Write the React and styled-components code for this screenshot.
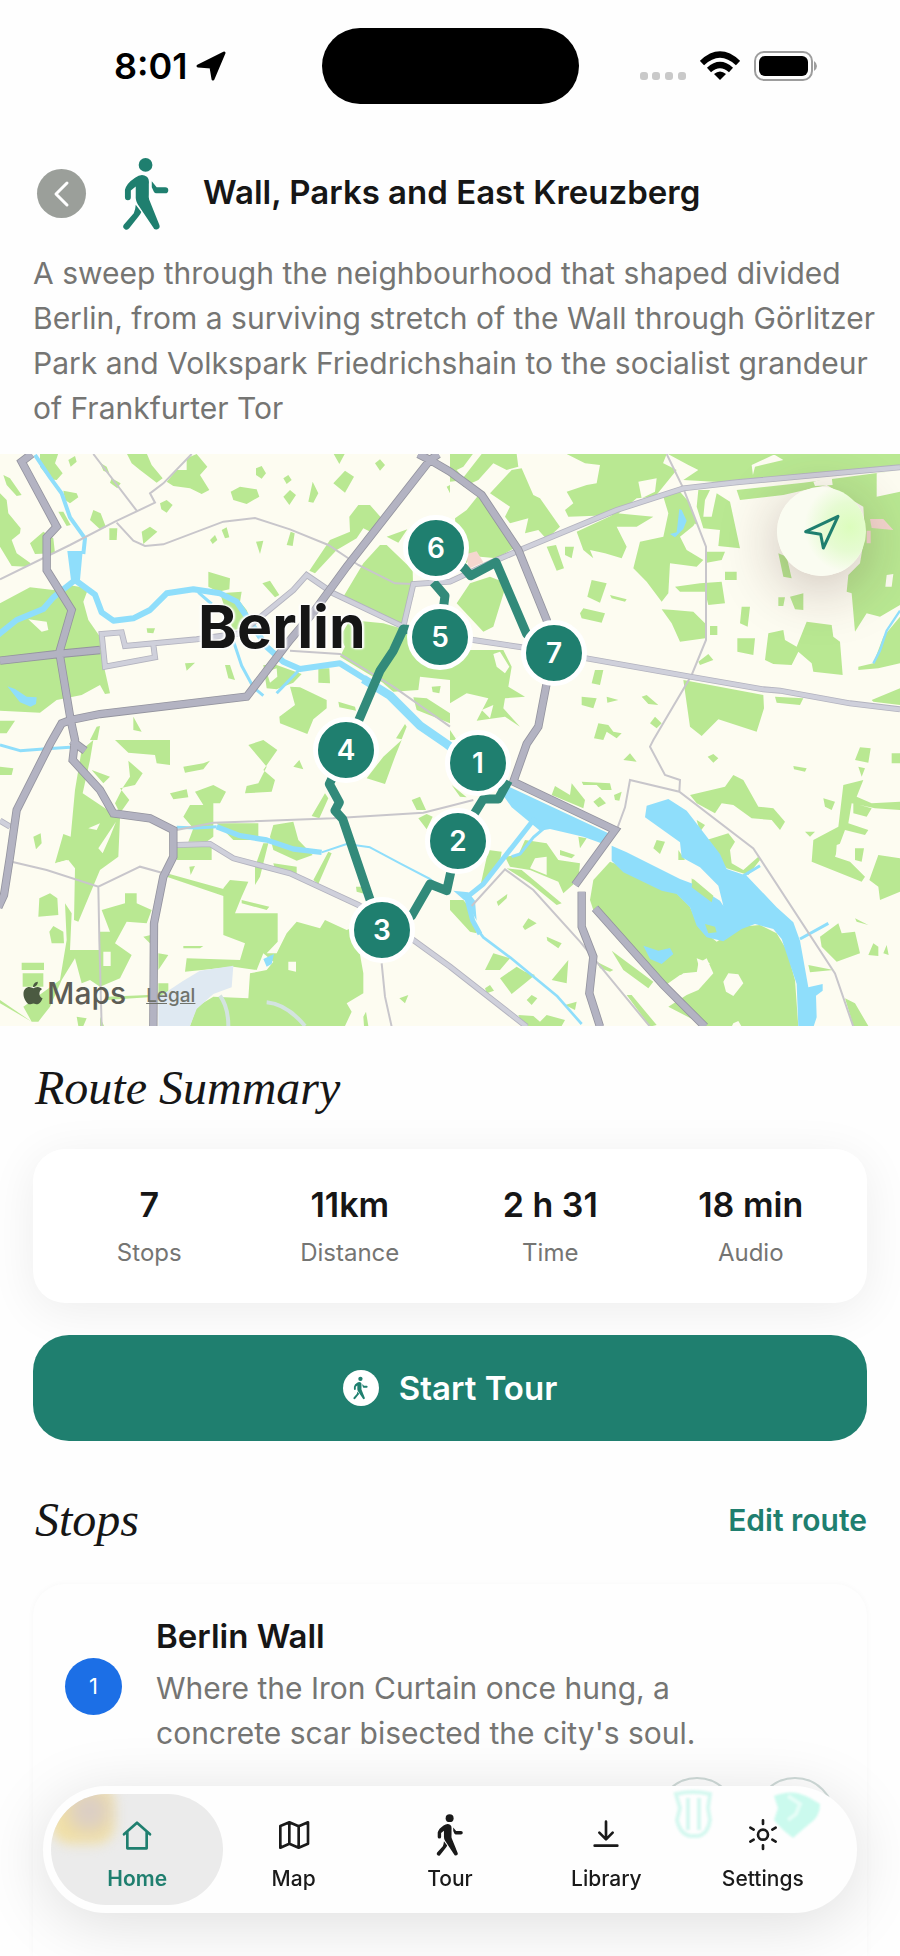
import styled, { createGlobalStyle } from "styled-components"
import { FaApple } from "react-icons/fa"

const GlobalStyle = createGlobalStyle`
  * {
    box-sizing: border-box;
  }
  body {
    margin: 0;
    background: #fefefe;
    color: #161616;
    font-family: Inter, "Liberation Sans", sans-serif;
  }
  button {
    font-family: inherit;
    border: none;
    padding: 0;
    cursor: pointer;
  }
`

const green = "#1f7f6f"
const grey = "#757573"

const Page = styled.div`
  min-height: 100vh;
  display: flex;
  flex-direction: column;
  overflow: hidden;
`

const StatusBar = styled.div`
  height: 136px;
  padding: 28px 82px 0;
  display: grid;
  grid-template-columns: 1fr 257px 1fr;
  align-items: start;
`
const StatusGroup = styled.div`
  height: 76px;
  padding-left: 32px;
  display: flex;
  align-items: center;
  justify-content: ${(props) => props.$end ? "flex-end" : "flex-start"};
  gap: ${(props) => props.$end ? "14px" : "8px"};
`
const Clock = styled.span`
  font-size: 36px;
  font-weight: 600;
  color: #000;
`
const Island = styled.div`
  height: 76px;
  border-radius: 38px;
  background: #000;
`

const Header = styled.header`
  height: 115px;
  padding: 0 37px;
  display: flex;
  align-items: center;
`
const BackButton = styled.button`
  width: 49px;
  height: 49px;
  border-radius: 50%;
  background: #9b9f9a;
  display: flex;
  align-items: center;
  justify-content: center;
`
const HeaderIcon = styled.div`
  display: flex;
  margin: 0 34px 0 36px;
`
const Title = styled.h1`
  margin: 0;
  padding-bottom: 3px;
  font-size: 33px;
  font-weight: 600;
`
const Description = styled.p`
  margin: 0;
  padding: 0 20px 23px 33px;
  font-size: 30px;
  line-height: 45px;
  color: ${grey};
`

const MapArea = styled.section`
  position: relative;
  aspect-ratio: 900 / 572;
  overflow: hidden;
`
const MapDrawing = styled.svg`
  display: block;
  width: 100%;
  height: 100%;
`
const CityName = styled.div`
  position: absolute;
  left: 22%;
  top: 25%;
  font-size: 59px;
  line-height: 60px;
  font-weight: 700;
  text-shadow: 0 0 3px #fff, 1px 1px 2px #fff, -1px -1px 2px #fff, 2px 0 2px #fff, -2px 0 2px #fff;
`
const Pin = styled.button`
  position: absolute;
  left: ${(props) => props.$x / 9}%;
  top: ${(props) => props.$y / 5.72}%;
  width: 66px;
  height: 66px;
  margin: -33px 0 0 -33px;
  border: 5px solid #fff;
  border-radius: 50%;
  background: ${green};
  color: #fff;
  font-size: 28px;
  font-weight: 600;
`
const LocateButton = styled.button`
  position: absolute;
  right: 34px;
  top: 33px;
  width: 89px;
  height: 89px;
  border-radius: 50%;
  background: radial-gradient(circle at 82% 45%, #dcfdbd 0%, #e6fbd2 28%, #fafcf1 52%);
  box-shadow: 0 12px 60px rgba(60, 20, 20, 0.28);
  display: flex;
  align-items: center;
  justify-content: center;
`
const MapCredit = styled.div`
  position: absolute;
  left: 20px;
  bottom: 16px;
  display: flex;
  align-items: center;
  color: #4b5a41;
`
const MapBrand = styled.span`
  margin-left: 1px;
  font-size: 30px;
  line-height: 34px;
  font-weight: 500;
  color: #5c5c55;
`
const Legal = styled.a`
  margin-left: 20px;
  padding-top: 4px;
  font-size: 19px;
  font-weight: 500;
  color: #70736b;
`

const Content = styled.main`
  flex: 1;
  display: flex;
  flex-direction: column;
  padding: 32px 33px 0;
`
const SectionTitle = styled.h2`
  margin: 0;
  padding-left: 2px;
  font-family: "Liberation Serif", serif;
  font-style: italic;
  font-weight: 400;
  font-size: 48px;
  line-height: 60px;
`
const Summary = styled.dl`
  margin: 31px 0 32px;
  height: 154px;
  padding: 4px 16px 0;
  border-radius: 32px;
  background: #fff;
  box-shadow: 0 8px 48px rgba(0, 0, 0, 0.07);
  display: grid;
  grid-template-columns: repeat(4, 1fr);
  align-items: center;
`
const Stat = styled.div`
  display: flex;
  flex-direction: column-reverse;
  align-items: center;
  gap: 14px;
`
const StatLabel = styled.dt`
  font-size: 24px;
  line-height: 32px;
  color: ${grey};
`
const StatValue = styled.dd`
  margin: 0;
  font-size: 34px;
  line-height: 36px;
  font-weight: 600;
`
const StartButton = styled.button`
  height: 106px;
  border-radius: 36px;
  background: ${green};
  color: #fff;
  font-size: 33px;
  font-weight: 600;
  display: flex;
  align-items: center;
  justify-content: center;
  gap: 20px;
`
const RoundIcon = styled.span`
  width: 36px;
  height: 36px;
  border-radius: 50%;
  background: #fff;
  display: flex;
  align-items: center;
  justify-content: center;
`
const StopsHeader = styled.div`
  margin-top: 49px;
  display: flex;
  align-items: center;
  justify-content: space-between;
`
const EditLink = styled.a`
  color: ${green};
  font-size: 30px;
  font-weight: 600;
  text-decoration: none;
`
const StopCard = styled.article`
  flex: 1;
  margin-top: 34px;
  padding: 32px;
  border-radius: 32px 32px 0 0;
  background: #fefefe;
  box-shadow: 0 0 6px rgba(0, 0, 0, 0.03);
`
const StopRow = styled.div`
  display: flex;
  align-items: center;
  gap: 34px;
`
const StopNumber = styled.span`
  flex: none;
  width: 57px;
  height: 57px;
  border-radius: 50%;
  background: #1c6fe6;
  color: #fff;
  font-size: 22px;
  display: flex;
  align-items: center;
  justify-content: center;
`
const StopTitle = styled.h3`
  margin: 0;
  font-size: 33px;
  line-height: 40px;
  font-weight: 600;
`
const StopText = styled.p`
  margin: 10px 0 0;
  max-width: 560px;
  font-size: 30px;
  line-height: 45px;
  color: ${grey};
`
const StopActions = styled.div`
  margin-top: 21px;
  display: flex;
  justify-content: flex-end;
  gap: 18px;
`
const ActionButton = styled.button`
  width: 80px;
  height: 80px;
  border-radius: 50%;
  border: 2px solid #cfdad8;
  background: transparent;
`

const TabBar = styled.nav`
  position: fixed;
  left: 43px;
  right: 43px;
  bottom: 43px;
  height: 127px;
  padding: 0 16px;
  border-radius: 64px;
  background: #fefefe;
  box-shadow: 0 10px 64px rgba(0, 0, 0, 0.13);
  display: grid;
  grid-template-columns: repeat(5, 1fr);
`
const Tab = styled.a`
  position: relative;
  margin: 8px ${(props) => props.$active ? "-8px" : "0"};
  padding-top: 19px;
  border-radius: 56px;
  background: ${(props) => props.$active ? "#ebebeb" : "transparent"};
  color: ${(props) => props.$active ? green : "#1a1a1a"};
  display: flex;
  flex-direction: column;
  align-items: center;
  gap: 10px;
  text-decoration: none;
  font-size: 21px;
  line-height: 24px;
  font-weight: ${(props) => props.$active ? 600 : 500};
  overflow: hidden;
`
const TabIcon = styled.span`
  position: relative;
  height: 44px;
  display: flex;
  align-items: center;
`
const TabLabel = styled.span`
  position: relative;
`
const WarmGlow = styled.span`
  position: absolute;
  left: 0;
  top: -10px;
  width: 64px;
  height: 60px;
  border-radius: 20px;
  background: radial-gradient(circle at 60% 45%, #dccfc4 0 20%, #f0dfa6 58%);
  filter: blur(6px);
`
const GlassTint = styled.svg`
  position: absolute;
  right: 29px;
  top: 0;
  width: 160px;
  height: 60px;
`
const TintShape = styled.g`
  filter: blur(1px);
`

const Walker = ({ height, color }) => (
  <svg height={height} width={height * 0.62} viewBox="304 76 144 230" fill={color}>
    <circle cx="376" cy="102" r="21" />
    <path d="M344 141Q364 126 380 138Q388 145 386 162V190Q385 202 387 208L418 285A10 10 0 0 1 399 293L352 222Q345 212 346 195V168L331 180V201A8 8 0 0 1 313 201V178Q318 158 344 141Z" />
    <path d="M395 152L410 170H436A9 9 0 0 1 436 189H409Q404 189 401 183L395 170Z" />
    <path d="M346 224L363 246Q361 252 355 259L326 296A10 10 0 0 1 310 284L340 250Q345 240 346 224Z" />
  </svg>
)

const LineIcon = ({ d, children }) => (
  <svg width="32" height="32" viewBox="0 0 96 96" fill="none" stroke="currentColor" strokeWidth="8" strokeLinecap="round" strokeLinejoin="round">
    <path d={d} />
    {children}
  </svg>
)

// the map is drawn at three units to the pixel, in four sheets
const sheets = {
  nw: "translate(0 -12)",
  ne: "translate(1350 -12)",
  sw: "translate(0 858)",
  se: "translate(1350 858)",
}

const parks = {
  nw: `M120 10H175L165 40L188 70L170 90L150 88L120 50ZM380 10H440L455 45L488 85L470 98L420 60L395 40ZM560 25L590 12L622 50L600 75L628 120L605 132L570 115L520 108L500 95L530 60L560 60Z
    M10 75L30 85L65 135L50 138L20 105ZM0 130L20 150L25 190L62 235L60 250L35 270L50 310L92 340L80 350L35 348L0 290Z
    M190 122L230 130L235 142L210 160L195 150ZM90 280L130 245L160 265L165 310L105 312ZM270 210L280 180L302 190L318 232L300 238ZM175 185L190 185L212 225L200 228ZM205 30L225 18L230 35L212 50ZM300 38L320 50L328 70L310 62ZM335 85L362 100L352 115L330 98Z
    M328 235L352 235L350 270L328 270ZM425 245L450 230L472 245L430 282ZM480 160L500 150L518 165L500 188L484 178ZM692 125L720 110L770 118L778 140L740 162L700 150ZM850 140L870 120L888 135L868 165ZM925 155L938 95L955 130L940 158ZM1000 100L1035 62L1062 80L1035 128ZM768 55L785 48L798 70L785 86L768 75ZM1125 40L1140 28L1155 45L1140 62ZM850 85L865 75L875 90L860 102ZM1000 10H1035L1018 42Z
    M630 270L645 255L652 270L638 282ZM665 240L680 232L688 262L675 265ZM768 275L790 272L780 312ZM860 285L872 245L884 250L878 288ZM1048 200L1075 165L1110 165L1145 205L1120 250L1090 235L1070 265L1010 300L945 370L928 362L990 270L1050 245ZM1160 260L1222 238L1195 278ZM1140 285L1160 285L1238 360L1240 440L1205 520L1030 440L1090 340Z
    M0 460L90 412L160 420L205 405L265 415L250 455L265 510L300 560L312 650L330 730L315 732L300 705L245 735L170 750L120 788L0 782ZM625 365L690 385L688 418L655 425L625 410ZM787 400L810 392L838 435L825 442ZM660 430L725 425L720 455L740 480L760 530L700 540L680 490ZM440 535L465 535L460 550L442 548ZM555 640L585 638L560 662ZM675 645L690 645L705 690L685 685ZM1050 510L1150 520L1220 540L1350 590V690L1260 680L1200 705L1160 705L1020 620L1035 590L1020 560Z
    M790 645L830 645L905 672L880 698L830 718L800 715ZM955 655L988 655L990 700L955 698ZM1180 640L1350 640V690L1260 680L1255 720L1180 725L1150 700ZM870 710L900 712L980 750L980 775L940 808L922 852L840 820L838 800L885 765ZM400 800L425 845L400 840ZM270 870L290 830L300 828L292 870ZM0 812L45 812L20 850H0ZM1240 742L1280 745L1350 790V820L1250 780ZM1188 865L1215 822L1220 830L1205 868ZM1015 755L1065 770L1068 782L1018 772ZM1295 710L1322 708L1318 730L1298 726ZM1340 110L1350 105V130Z`,
  ne: `M0 10H70L40 50L20 60L45 90L0 95ZM95 12H200L205 50L170 60L130 40L85 90L40 110L30 95ZM185 60L215 55L250 135L270 145L330 230L290 268L265 240L225 250L235 205L180 220L165 200L180 170L120 130ZM15 205L50 180L90 130L130 190L180 240L200 290L140 325L90 320L65 310L50 340L20 300Z
    M350 12H565L580 65L640 40L680 60L615 140L560 145L500 195L355 200L345 180L370 160L350 125L410 105L440 100L450 45L405 40ZM560 12H650L635 50L580 65ZM650 10H980L905 45L910 85L870 100L700 90L745 60L715 45ZM970 12H1350V50L1290 60L905 90L915 50L1000 30ZM860 120L1060 98L1350 60L1280 70V140L1350 125V465L1290 500L1250 490L1215 545L1205 430L1190 425L1195 375L1230 340L1245 250L1240 170L1130 105L1000 135L870 150Z
    M745 120L780 120L765 150L760 200H785L800 130L840 155L870 295L805 288L810 240L760 235L740 170ZM380 245L500 190L610 200L560 230H500L530 290L515 325L465 310L420 300L430 325L400 300ZM640 140L690 125L720 160L740 220L690 260L710 300L760 330L740 350L660 340L655 430L635 455L590 395L550 355L570 275L640 260L655 190ZM770 305L825 305L815 330L770 338ZM825 365H860V390H825ZM675 410L750 400L815 395L825 460L775 465L765 425L690 425ZM635 478L670 480L730 485L765 520V565L690 575L665 520Z
    M290 290L318 285L342 355L320 362ZM345 290L372 290L365 325L345 315ZM412 440L425 390L470 400L450 458ZM390 490L400 475L465 490L455 518L395 505ZM480 435L530 448L525 455L485 445ZM985 310L1010 320L1025 385L1000 380ZM985 442H1005L1000 468H985ZM1020 440L1060 430V480L1035 478ZM875 470L900 470L893 530L870 520ZM862 565L915 565L910 615L862 605ZM780 528H802V555H780ZM945 630L955 550L1000 540L1005 570L1040 590L1070 515L1145 525L1150 560L1170 575L1178 675L1090 665L1085 640L1045 605L1025 645L970 642ZM745 635L775 612L790 630L750 645ZM1225 650L1270 640L1300 560L1350 500V640L1285 655L1225 660ZM1265 750L1350 715V765L1270 755ZM975 740L1060 745L1050 765L980 758Z
    M60 400L120 380L170 400L130 530L100 545L20 460ZM0 610L40 600L160 600L185 650L175 710L225 740L165 745L160 775L210 830L165 800L80 812L115 745L50 730L0 760ZM0 840L20 870H0ZM435 660H460L450 705L425 700ZM395 740L440 745L430 775L395 765ZM470 740L505 750L472 758ZM575 740L590 735L625 765L595 762ZM600 820L615 800L635 820L620 835ZM432 865L445 820L475 825L490 845L515 850L500 865L470 845L460 870ZM700 690L940 735L942 775L920 845L805 808L755 858L720 830Z`,
  sw: `M245 30L280 0L270 60L248 160L360 235L355 350L300 390L235 545L222 540L225 385L205 360L165 370L190 282L212 290L225 150ZM345 0H510V75L470 70L465 45L385 38ZM385 62L428 100L405 135L360 145L388 180L360 220L345 190L370 140L390 110ZM275 90L330 110L310 130ZM550 80L610 70L630 62L610 88L555 98ZM745 15L790 0L832 30L790 90L825 120L815 155L735 160L740 138L775 130L800 80ZM510 160L560 148L565 172L520 178ZM585 155L640 135L678 155L660 190L640 190V290L620 305L565 305L580 265L550 230L570 195H610ZM880 80L898 60L910 88ZM1100 115L1150 50L1205 0L1185 50L1155 132ZM1235 180L1260 170L1278 210H1250ZM1255 235L1280 222L1298 230L1280 268ZM935 228L975 160L985 175L958 235ZM530 318H635V360H530ZM650 250L775 250V300L700 300ZM820 255L880 245L895 300L938 345L890 362L820 330L810 290ZM790 310L805 310L780 410L765 435V380ZM820 370L890 380V400L825 390ZM940 420L985 335L995 340L955 432ZM0 80L40 85L35 105L0 105ZM100 290L122 280L125 310L108 328ZM568 380L585 378L572 405ZM500 400L700 455L690 475L500 410ZM1068 440L1100 440L1095 462L1070 455Z
    M670 445L690 420L745 425L725 470L705 520H833V605L800 640L830 640L860 580L890 545L960 565L975 540L1040 570L1065 560L1090 700V760L1040 790L1055 815L1035 858H570L590 800L640 770L745 775L750 700L800 690L820 665L790 640L770 690L700 680L555 695L560 655L720 660L735 610L670 585ZM725 480L808 500L800 510L725 490ZM115 530L118 475L150 460L172 475L175 525ZM148 575L160 558L190 575L192 610L155 610ZM305 510L375 490V460H410V490L455 510L440 550L380 545L345 610L395 645L360 715L300 740L270 720L245 730L225 655L185 720L150 800L115 845H95L0 790V780L95 845L70 800L180 720L200 600L195 490L215 520L210 630H300V575L330 575ZM65 668H132V690H65ZM68 700H130V740H68ZM475 640L505 645L475 690ZM475 730H505V765L475 790ZM430 590L452 585V612ZM320 770L445 765V772L320 780ZM550 618H610L600 625H550ZM1198 775L1225 765L1215 790ZM1090 830L1098 815L1105 858H1092ZM230 830L260 835L250 858H235ZM300 830L312 858H300Z`,
  se: `M5 135L50 172L30 170ZM305 165L315 138L360 165L365 130L405 180L400 205ZM395 125L480 130L485 150L455 150L440 135L400 135ZM430 185L450 170L468 190L445 202ZM492 165L515 155L508 182L495 180ZM520 60L540 40L560 65ZM773 50L790 42L805 55L790 68ZM1030 78L1070 85L1065 95L1032 88ZM720 165L825 140L850 105L880 120L925 200L970 205L1005 245L990 270L965 240L905 235L850 195L815 190L795 220L740 190ZM1215 60L1230 22L1262 25L1255 68ZM1225 80L1245 85L1235 110ZM1325 40H1350V70H1325ZM1180 135L1240 120L1220 170L1265 190L1350 185V210L1275 205L1205 190L1195 250L1255 270L1245 285L1185 270L1155 350L1200 365L1245 410L1235 425L1085 365L1090 300L1165 260ZM1210 190L1265 205L1250 230L1210 220ZM1120 175L1155 185L1145 210L1125 200ZM1215 325L1242 325L1235 365L1215 360ZM1285 345L1350 355V455L1290 480L1285 440L1258 420ZM1065 275H1095L1080 290ZM740 240L765 255L750 275ZM770 300L835 280L855 305L840 330L845 370L880 390L925 350L930 360L895 405L830 385L800 350ZM610 325L620 300L645 305L630 342ZM685 330L705 360H685Z
    M205 345L225 300L290 310L325 360L390 370L385 420L340 460L325 425L240 390L180 380L165 350ZM95 420L115 330L155 335L150 365L90 440ZM170 385L215 390L335 490L320 495L240 430ZM385 290L410 295L390 325ZM330 330L375 345L365 355L330 345ZM430 420L480 365L560 395L680 460L720 500L745 560L800 605L870 560L930 555L980 580L1010 630L1035 720L1045 860H770L655 800L710 765L745 750L790 700L770 655L745 670L740 700L690 705L640 740L430 510L420 480ZM725 415L790 475L785 490L725 440ZM765 560L790 555L800 575L780 580ZM0 480L40 480L65 510L80 580L60 575L0 510ZM140 485L172 462L170 475L145 498ZM218 560L235 535L260 550L225 570ZM290 590L335 610L325 625L292 602ZM105 690L130 640L180 655L150 690ZM150 715L200 680L225 695L255 705L225 730L185 762ZM305 720L355 660L350 730ZM440 665L490 690L480 695L450 685ZM485 632L610 725L595 745L520 690ZM530 765L545 765L620 855L600 860ZM105 745L120 735L132 752L110 760ZM230 780L245 765L262 775L245 795ZM205 825L250 828L270 845L290 825L345 840L335 858H220ZM345 795L380 785L375 810ZM1110 590L1165 550L1175 580L1215 575L1230 640L1160 665L1115 620ZM1215 535L1255 555L1220 545ZM1255 645L1270 610L1285 620V648ZM1300 640L1310 615L1316 645ZM1075 675L1150 690L1080 697ZM1185 775L1215 790L1255 858H1210Z`,
}

const clearings = {
  nw: `M85 508L140 515L145 540L125 545ZM800 665L830 655L832 680L810 698Z`,
  ne: `M565 95L620 85L615 125L575 145ZM1255 492L1290 510L1285 570L1230 600L1250 520ZM1310 375L1330 372L1325 410H1306ZM130 612L150 605L178 650L165 670L140 650ZM95 780L130 765L120 805ZM715 255L735 220L755 270L740 300L708 275ZM1090 95L1145 82L1148 105L1095 108Z`,
  sw: `M265 265L300 250L290 270ZM295 325L348 245L330 290L308 340ZM310 635H332V678H310ZM865 665H888V695L865 690ZM165 370L200 360L212 380Z`,
  se: `M655 735L700 700L745 695L780 670L740 655L755 710L735 730L700 750L690 765ZM820 725L835 700L865 703L880 730L850 768L828 755ZM255 355L290 350V405L240 385ZM1160 315L1200 300L1190 350L1158 345ZM785 485L820 490L815 512ZM850 850L865 843L875 860H845Z`,
}

const lakes = `M202 291H248L240 378H213ZM22 697L45 705L80 728L110 730L108 750L92 758L60 745ZM1350 870L1400 920L1520 995L1830 1140L1825 1175L1750 1148L1650 1125L1620 1130L1535 1060L1500 1010L1350 890Z
  M1835 1175L1880 1195L2040 1275L2080 1290L2160 1340L2170 1355L2155 1295L2100 1240L2045 1210L2040 1165L1935 1090L1940 1055L2005 1035L2060 1070L2095 1115L2160 1200L2180 1245L2240 1265L2330 1360L2380 1405L2400 1460L2425 1600L2468 1590V1610L2448 1625L2450 1690L2440 1720H2395L2390 1590L2345 1455L2320 1425L2265 1410L2225 1425L2170 1462L2120 1450L2090 1415L2070 1360L2030 1320L1985 1310L1870 1255L1835 1220Z
  M1930 1475L1975 1490L2010 1482L2020 1500L1985 1530L1950 1515ZM790 1515L822 1500L815 1530L800 1538ZM2010 240L2030 235L2038 165L2045 168L2060 200L2050 225L2025 250ZM1360 1310L1405 1315L1425 1340L1430 1400L1400 1345Z`

const streams = [
  { w: 12, d: "M105 3L150 70L185 118L210 190L255 253L250 300" },
  { w: 18, d: "M225 378L160 430L130 465L50 498L-5 542" },
  { w: 18, d: "M225 378L285 422L305 475L340 500L400 493L450 468L500 418L580 406L660 418L710 443L740 488L800 578L850 623L900 645L1020 628L1100 678" },
  { w: 26, d: "M1090 675L1170 725L1260 815L1340 870L1380 900" },
  { w: 9, d: "M700 560L725 635L760 700L790 725M595 415L635 450M900 645L830 718" },
  { w: 9, d: "M0 873L60 890L130 885L210 880M530 1120L590 1122L650 1118" },
  { w: 16, d: "M650 1118L720 1145L800 1158L880 1185L965 1195" },
  { w: 6, d: "M965 1195L1040 1170L1110 1180L1200 1228L1290 1275L1350 1320" },
  { w: 15, d: "M1605 1092L1540 1175L1450 1290L1400 1330L1418 1400L1440 1440" },
  { w: 9, d: "M1635 1120L1600 1150L1560 1200L1535 1208" },
  { w: 8, d: "M1420 1410L1450 1450L1530 1510L1670 1625L1745 1710" },
  { w: 9, d: "M2230 1265L2280 1235M2400 1455L2485 1408" },
  { w: 7, d: "M2700 470L2660 530L2640 590L2620 628" },
]

const thinRoads = `M0 376L210 273L345 203L465 146L450 118L490 88L575 0M280 0L410 170M350 206L400 260L435 276L490 271L670 203L765 192L870 226L985 273L1075 333L1185 388L1240 390M870 590L1020 600L1180 698L1350 818
  M2000 0L2050 103L2118 278V558L2075 663L1960 858L1950 878L1995 963L2040 978L2038 1013M1850 1128L1875 1060L1890 978L2038 1013L2260 1183L2505 1558L2560 1718M1415 1356L1515 1246L1600 1308L1740 1463L1950 1718
  M35 1223L140 1248L295 1298L420 1238L510 1263M295 1298L298 1458L305 1718M530 1128L640 1106L1000 1093L1270 1076L1350 1056L1420 1038M1145 1528L1155 1628L1175 1718`

const midRoads = `M590 556L375 576L365 535L305 540L315 638L465 610L460 572M590 556L720 538L780 490L880 408L920 363L1000 418L1210 518L1420 558L1565 580L1760 613L2070 668L2290 706L2340 710L2550 748L2700 766
  M1210 518L1240 390L1350 383L1490 318L1560 288L1850 168L2050 103L2210 85L2700 40M530 1173L630 1170L700 1213L870 1258L1075 1353L1240 1458L1350 1538L1580 1718M0 1100L30 1118`

const mainRoads = `M95 0L65 23L170 218L140 250V348L215 468L178 595L212 798L225 858L218 918L300 1008L340 1078L450 1093L520 1128V1208L490 1268L462 1408L460 1718M0 620L175 600L300 588
  M212 798L185 808L150 870L50 1068L30 1208L12 1323L-5 1360M212 798L300 780L740 728L870 558L940 475L1040 338L1290 18L1255 0M1315 0L1290 18L1350 53L1445 123L1555 288L1640 498L1660 597L1640 688L1615 818L1580 870L1540 983L1845 1128L1725 1293M215 860L255 890
  M1745 1313V1418L1780 1508L1768 1618L1800 1718M1785 1363L1990 1593L2115 1718`

const route = "M1525 980L1495 1035L1450 1035L1373 1160L1340 1310L1290 1290L1235 1385L1145 1440L1028 1095L1005 1070L1018 1045L988 990L1036 890L1080 790L1140 650L1180 590L1210 525L1320 540L1335 425L1300 385M1307 300L1390 340L1412 365L1488 325L1580 540L1661 597"

const pins = [
  { label: 6, x: 436, y: 94 },
  { label: 5, x: 440, y: 183 },
  { label: 7, x: 554, y: 199 },
  { label: 4, x: 346, y: 296 },
  { label: 1, x: 478, y: 309 },
  { label: 2, x: 458, y: 387 },
  { label: 3, x: 382, y: 476 },
]

const stats = [
  { label: "Stops", value: "7" },
  { label: "Distance", value: "11km" },
  { label: "Time", value: "2 h 31" },
  { label: "Audio", value: "18 min" },
]

const RouteMap = () => (
  <MapArea aria-label="Route map">
    <MapDrawing viewBox="0 0 2700 1716" preserveAspectRatio="none" fill="none" aria-hidden="true">
      <rect width="2700" height="1716" fill="#fdfcf1" />
      {Object.keys(sheets).map((key) => (
        <g key={key} transform={sheets[key]}>
          <path d={parks[key]} fill="#b9e892" />
          <path d={clearings[key]} fill="#fdfcf1" />
        </g>
      ))}
      <path d="M475 1716V1630L550 1580L600 1550L700 1535L695 1600L640 1620L590 1665L570 1716Z" fill="#dfe9f2" />
      <path d="M660 1625Q685 1660 685 1716M800 1645Q860 1650 915 1716" stroke="#d3e3e0" strokeWidth="12" />
      <path d="M1400 300L1430 292L1450 325L1405 345ZM2610 195H2650L2680 228L2615 222ZM2600 230H2612V268H2600Z" fill="#f5d7cf" />
      <g stroke="#8fdefb" strokeLinejoin="round">
        <path d={lakes} fill="#8fdefb" stroke="none" />
        {streams.map((stream) => <path key={stream.d} d={stream.d} strokeWidth={stream.w} />)}
      </g>
      <path d="M2115 1410L2145 1418L2150 1435L2125 1438ZM2080 1275L2140 1325L2135 1345L2075 1300Z" fill="#b9e892" />
      <path d={thinRoads} stroke="#c8c6cb" strokeWidth="6" />
      <path d={midRoads} stroke="#b3b3bf" strokeWidth="18" />
      <path d={midRoads} stroke="#cfd0db" strokeWidth="13" />
      <path d={mainRoads} stroke="#94949f" strokeWidth="25" />
      <path d={mainRoads} stroke="#b3b3c2" strokeWidth="20" />
      <path d={route} stroke="#328a7a" strokeWidth="27" strokeLinejoin="round" />
    </MapDrawing>
    <CityName>Berlin</CityName>
    {pins.map((pin) => (
      <Pin key={pin.label} $x={pin.x} $y={pin.y} aria-label={`Stop ${pin.label}`}>{pin.label}</Pin>
    ))}
    <LocateButton aria-label="Show my location">
      <svg width="36" height="36" viewBox="0 0 108 108" fill="none" stroke={green} strokeWidth="9" strokeLinejoin="round">
        <path d="M5 53L102 7L58 102L50 61Z" />
      </svg>
    </LocateButton>
    <MapCredit>
      <FaApple size={26} />
      <MapBrand>Maps</MapBrand>
      <Legal href="#legal">Legal</Legal>
    </MapCredit>
  </MapArea>
)

const App = () => {
  return (
    <Page>
      <GlobalStyle />
      <StatusBar>
        <StatusGroup>
          <Clock>8:01</Clock>
          <svg width="30" height="30" viewBox="0 0 30 30" stroke="#000" strokeWidth="3" strokeLinejoin="round">
            <path d="M2 15L28 2L17 28L15 16Z" />
          </svg>
        </StatusGroup>
        <Island />
        <StatusGroup $end>
          <svg width="46" height="30" viewBox="0 0 46 30" fill="#c9c9c9">
            <rect x="0" y="21" width="8" height="8" rx="3" />
            <rect x="12" y="21" width="8" height="8" rx="3" />
            <rect x="25" y="21" width="8" height="8" rx="3" />
            <rect x="38" y="21" width="8" height="8" rx="3" />
          </svg>
          <svg width="40" height="30" viewBox="0 0 40 30" fill="none" stroke="#000" strokeWidth="6">
            <path d="M2 12Q20 -5 38 12" />
            <path d="M9 19Q20 9 31 19" />
            <path d="M20 29L14 23Q20 18 26 23Z" fill="#000" stroke="none" />
          </svg>
          <svg width="64" height="30" viewBox="0 0 64 30">
            <rect x="1" y="1" width="57" height="28" rx="9" fill="none" stroke="#9d9d9d" strokeWidth="2" />
            <rect x="5" y="5" width="49" height="20" rx="6" />
            <path d="M60 10Q63 12 63 15T60 20Z" fill="#9d9d9d" />
          </svg>
        </StatusGroup>
      </StatusBar>

      <Header>
        <BackButton aria-label="Back">
          <svg width="18" height="28" viewBox="0 0 18 28" fill="none" stroke="#fff" strokeWidth="3" strokeLinecap="round" strokeLinejoin="round">
            <path d="M14 3L3 14L14 25" />
          </svg>
        </BackButton>
        <HeaderIcon>
          <Walker height={76} color={green} />
        </HeaderIcon>
        <Title>Wall, Parks and East Kreuzberg</Title>
      </Header>
      <Description>
        A sweep through the neighbourhood that shaped divided Berlin, from a surviving stretch of the Wall through Görlitzer Park and Volkspark Friedrichshain to the socialist grandeur of Frankfurter Tor
      </Description>

      <RouteMap />

      <Content>
        <SectionTitle>Route Summary</SectionTitle>
        <Summary>
          {stats.map((stat) => (
            <Stat key={stat.label}>
              <StatLabel>{stat.label}</StatLabel>
              <StatValue>{stat.value}</StatValue>
            </Stat>
          ))}
        </Summary>
        <StartButton>
          <RoundIcon><Walker height={24} color={green} /></RoundIcon>
          Start Tour
        </StartButton>
        <StopsHeader>
          <SectionTitle>Stops</SectionTitle>
          <EditLink href="#edit">Edit route</EditLink>
        </StopsHeader>
        <StopCard>
          <StopRow>
            <StopNumber>1</StopNumber>
            <div>
              <StopTitle>Berlin Wall</StopTitle>
              <StopText>Where the Iron Curtain once hung, a concrete scar bisected the city's soul.</StopText>
            </div>
          </StopRow>
          <StopActions>
            <ActionButton aria-label="Remove stop" />
            <ActionButton aria-label="Show directions" />
          </StopActions>
        </StopCard>
      </Content>

      <TabBar>
        <GlassTint viewBox="0 0 160 60" fill="none" aria-hidden="true">
          <TintShape stroke="#d6f8f0" strokeWidth="4">
            <path d="M8 8Q25 4 42 8L40 22L42 34Q40 48 30 50H22Q12 48 9 34L12 22Z" />
            <path d="M20 12V44M31 12V44" />
          </TintShape>
          <TintShape>
            <path d="M106 10Q125 2 142 12L152 18Q152 28 146 34Q134 44 125 52Q114 44 106 34L110 22Z" fill="#cbfaee" />
            <path d="M120 10L132 18L128 28L120 34" stroke="#e6fdf7" strokeWidth="4" />
          </TintShape>
        </GlassTint>
        <Tab href="#home" $active>
          <WarmGlow />
          <TabIcon><LineIcon d="M9 46L48 11L87 46M19 40V88H77V40" /></TabIcon>
          <TabLabel>Home</TabLabel>
        </Tab>
        <Tab href="#map">
          <TabIcon><LineIcon d="M7 21L34 10L62 22L90 10V74L62 86L34 74L7 86ZM34 10V74M62 22V86" /></TabIcon>
          <TabLabel>Map</TabLabel>
        </Tab>
        <Tab href="#tour">
          <TabIcon><Walker height={44} color="#1a1a1a" /></TabIcon>
          <TabLabel>Tour</TabLabel>
        </Tab>
        <Tab href="#library">
          <TabIcon><LineIcon d="M48 8V60M28 41L48 61L68 41M14 80H82" /></TabIcon>
          <TabLabel>Library</TabLabel>
        </Tab>
        <Tab href="#settings">
          <TabIcon>
            <LineIcon d="M48 4V15M48 79V90M10 26L20 32M76 62L86 68M10 68L20 62M76 32L86 26">
              <circle cx="48" cy="47" r="15" />
            </LineIcon>
          </TabIcon>
          <TabLabel>Settings</TabLabel>
        </Tab>
      </TabBar>
    </Page>
  )
}

export default App
